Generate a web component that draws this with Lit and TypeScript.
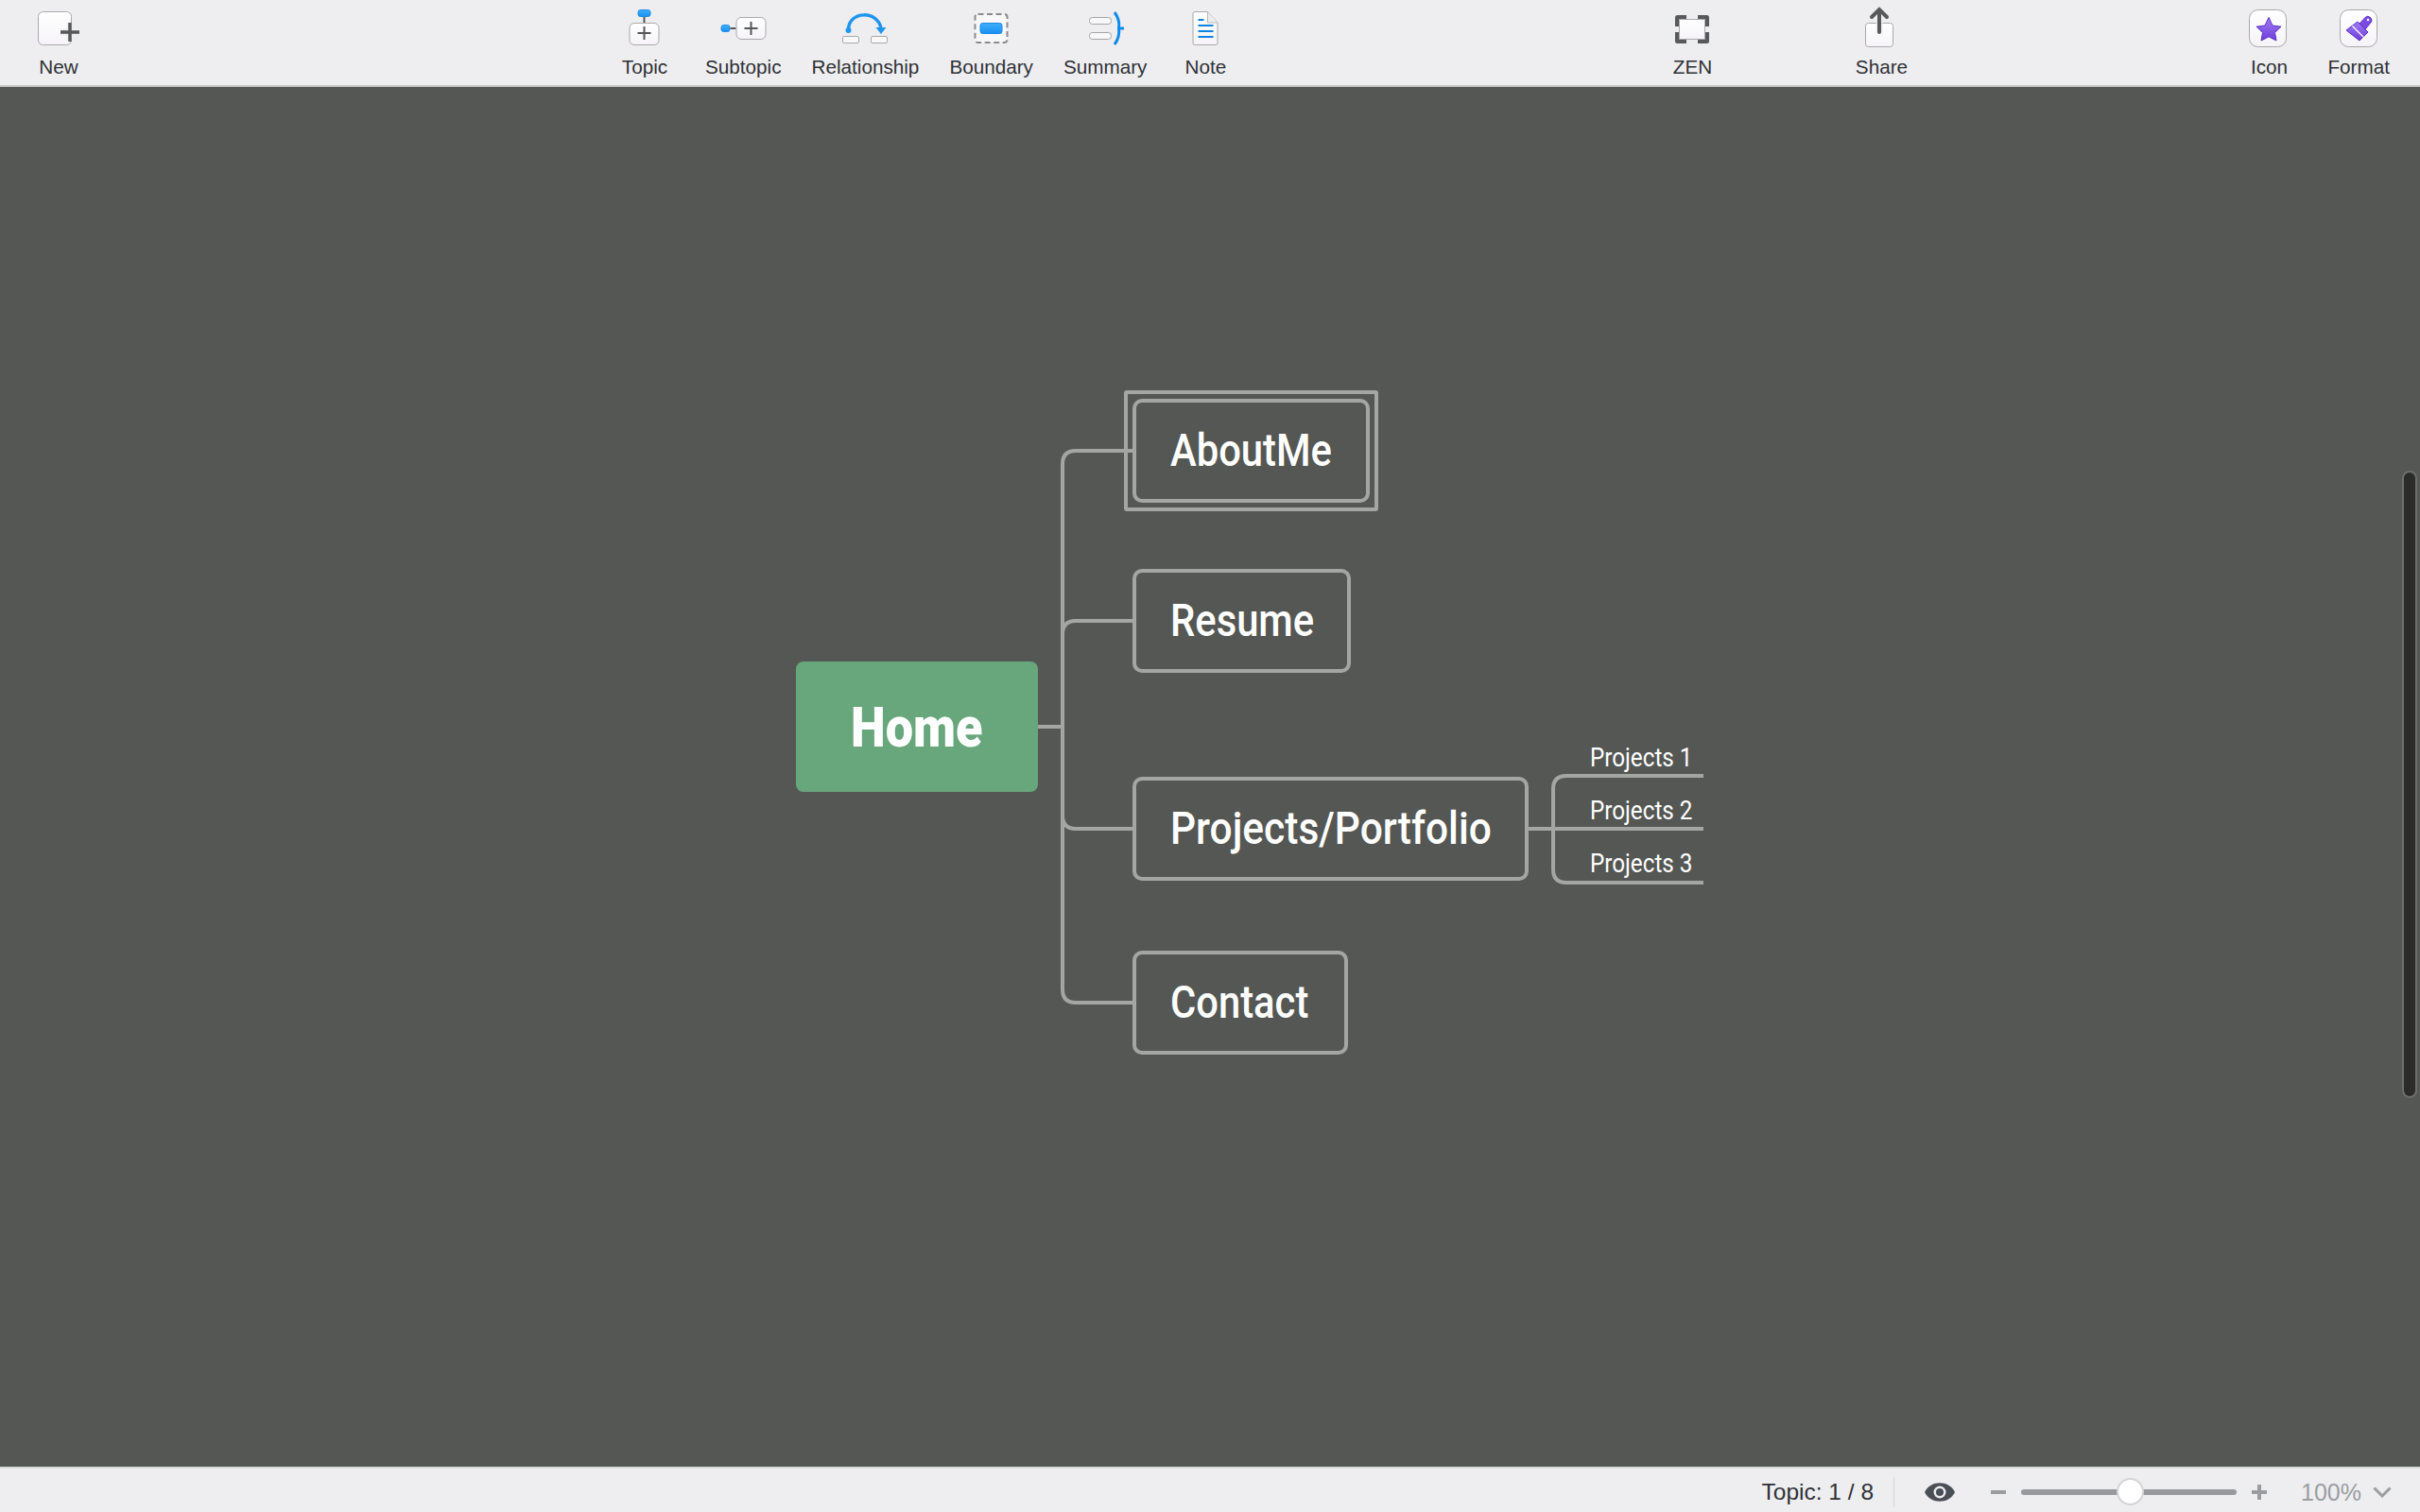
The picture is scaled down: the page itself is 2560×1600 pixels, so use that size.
import { LitElement, css, html, svg } from 'lit';
import { customElement } from 'lit/decorators.js';

const CANVAS_TOP = 92;

// page coordinates, the map is a free canvas
const topics = [
  { label: 'AboutMe', x: 1198, y: 422, w: 251, h: 110, cls: '' },
  { label: 'Resume', x: 1198, y: 602, w: 231, h: 110, cls: '' },
  { label: 'Projects/Portfolio', x: 1198, y: 822, w: 419, h: 110, cls: 'wide' },
  { label: 'Contact', x: 1198, y: 1006, w: 228, h: 110, cls: '' },
];

const subtopics = [
  { label: 'Projects 1', x: 1682, y: 785 },
  { label: 'Projects 2', x: 1682, y: 841 },
  { label: 'Projects 3', x: 1682, y: 897 },
];

const plus = (cx: number, cy: number, r: number, w = 2) => svg`
  <path d="M${cx - r} ${cy}H${cx + r}M${cx} ${cy - r}V${cy + r}" stroke="#555759" stroke-width=${w} fill="none" />
`;

const card = (x: number, y: number, w: number, h: number, r = 5) => svg`
  <rect x=${x + 0.5} y=${y + 0.5} width=${w - 1} height=${h - 1} rx=${r} fill="url(#card)" stroke="#a9a9ab" />
`;

const blue = (x: number, y: number, w: number, h: number) => svg`
  <rect x=${x + 0.5} y=${y + 0.5} width=${w - 1} height=${h - 1} rx="2.5" fill="url(#blue)" stroke="#1a8be6" />
`;

const icons: Record<string, unknown> = {
  New: svg`
    ${card(40, 12, 36, 36)}
    <path d="M64 34H84M74 24V44" stroke="#eeeef0" stroke-width="7" fill="none" />
    ${plus(74, 34, 10, 3.5)}
  `,
  Topic: svg`
    <path d="M682 18V24" stroke="#555759" stroke-width="2" />
    ${blue(675, 10, 14, 8)}
    ${card(666, 24, 32, 24)}
    ${plus(682, 35, 7)}
  `,
  Subtopic: svg`
    <path d="M772 30H778" stroke="#555759" stroke-width="2" />
    ${blue(762, 26, 10, 8)}
    ${card(778, 18, 32, 24)}
    ${plus(794, 30, 7)}
  `,
  Relationship: svg`
    <rect x="892.5" y="38.5" width="17" height="7" rx="1.5" fill="#f8f8fa" stroke="#a9a9ab" />
    <rect x="922.5" y="38.5" width="17" height="7" rx="1.5" fill="#f8f8fa" stroke="#a9a9ab" />
    <path d="M898.5 31C899 11 930 11 933 30" stroke="#1e96ee" stroke-width="3.5" fill="none" />
    <circle cx="898.5" cy="32" r="3" fill="#1e96ee" />
    <path d="M927.5 29H938.5L933 36Z" fill="#1e96ee" />
  `,
  Boundary: svg`
    <rect x="1031" y="15" width="34" height="30" rx="3" fill="#f8f7fa" stroke="#8b8b8d" stroke-width="2" stroke-dasharray="6 3.5" />
    <rect x="1036.5" y="24.5" width="23" height="11" rx="2.5" fill="url(#blue)" stroke="#1a8be6" />
  `,
  Summary: svg`
    <rect x="1152.5" y="18.5" width="23" height="7" rx="3" fill="#f8f8fa" stroke="#a3a3a5" />
    <rect x="1152.5" y="34.5" width="23" height="7" rx="3" fill="#f8f8fa" stroke="#a3a3a5" />
    <path d="M1179 13Q1185 21 1183.5 30Q1185 39 1179 47M1183.5 30H1189" stroke="#0f8bea" stroke-width="3" fill="none" />
  `,
  Note: svg`
    <path d="M1264.5 12.5H1278L1288.5 24V45.5Q1288.5 47.5 1286.5 47.5H1264.5Q1262.5 47.5 1262.5 45.5V14.5Q1262.5 12.5 1264.5 12.5Z" fill="url(#card)" stroke="#a9a9ab" />
    <path d="M1278 12.5V24H1288.5" fill="#ececee" stroke="#b8b8ba" />
    <path d="M1268 21H1274M1268 27H1284M1268 33H1284M1268 39H1284" stroke="#0f84e0" stroke-width="2" fill="none" />
  `,
  ZEN: svg`
    <path d="M1774.5 28V18.5H1784M1796 18.5H1805.5V28M1805.5 34V43.5H1796M1784 43.5H1774.5V34" stroke="#58595b" stroke-width="5" fill="none" stroke-linejoin="round" />
    <rect x="1776.5" y="20.5" width="27" height="21" fill="url(#card)" stroke="#a9a9ab" />
  `,
  Share: svg`
    ${card(1973, 24, 30, 26, 3)}
    <path d="M1988 35V10M1980 18L1988 10L1996 18" stroke="#eeeef0" stroke-width="7" fill="none" opacity="0.8" />
    <path d="M1988 34V10M1980 18L1988 10L1996 18" stroke="#58595b" stroke-width="4" fill="none" stroke-linecap="round" />
  `,
  Icon: svg`
    ${card(2380, 10, 40, 40, 9)}
    <path d="M2401 18.5L2405 27L2414 28.2L2407.5 34.5L2409 43L2401 38.8L2393 43L2394.5 34.5L2388 28.2L2397 27Z" fill="url(#purple)" stroke="#5b30c4" />
  `,
  Format: svg`
    ${card(2476, 10, 40, 40, 9)}
    <path d="M2483 32L2495 23L2506 34L2497 43Z" fill="url(#purple)" stroke="#5b30c4" />
    <path d="M2489.5 27.5L2501 39" stroke="#f4f1fb" stroke-width="1.5" />
    <path d="M2497 25L2503 18.5A3.5 3.5 0 1 1 2508.5 24.5L2503 31Z" fill="#7a4be0" stroke="#5b30c4" />
    <circle cx="2506" cy="21" r="1.3" fill="#f4f1fb" />
  `,
};

// viewBox left edge of each 60px icon, so the drawings can keep page coordinates
const tool = (label: string, cx: number) => html`
  <div class="tool">
    <svg class="tool-icon" viewBox="${cx - 30} 0 60 59" width="60" height="59">${icons[label]}</svg>
    <span class="tool-label">${label}</span>
  </div>
`;

@customElement('app-root')
export class AppRoot extends LitElement {
  static styles = css`
    :host {
      display: flex;
      flex-direction: column;
      height: 100vh;
      overflow: hidden;
      font-family: "Liberation Sans", Arial, sans-serif;
      background: #555754;
    }

    .defs {
      position: absolute;
      width: 0;
      height: 0;
    }

    .toolbar {
      display: flex;
      flex: none;
      height: 90px;
      padding: 0 32px;
      background: #eeeef0;
      border-bottom: 2px solid #cbcbc9;
    }

    .group {
      display: flex;
      gap: 32px;
    }

    .group-insert {
      margin-left: 560px;
    }

    .group-insert .tool:first-child {
      margin-right: 2px;
    }

    .group-view {
      gap: 140px;
      margin-left: 455px;
    }

    .group-side {
      margin-left: auto;
    }

    .tool {
      display: flex;
      flex-direction: column;
      align-items: center;
      min-width: 60px;
    }

    .tool-icon {
      display: block;
      flex: none;
    }

    .tool-label {
      font-size: 20.7px;
      line-height: 24px;
      color: #2f3136;
      white-space: nowrap;
    }

    .canvas {
      position: relative;
      flex: 1;
      background: #555754;
    }

    .links {
      position: absolute;
      inset: 0;
      width: 100%;
      height: 100%;
    }

    .links path {
      fill: none;
      stroke: #a3a6a2;
      stroke-width: 4;
    }

    .node {
      position: absolute;
      display: flex;
      align-items: center;
      box-sizing: border-box;
      color: #fff;
      font-family: Roboto, sans-serif;
      white-space: nowrap;
    }

    .node span {
      display: inline-block;
      transform-origin: left center;
    }

    .root {
      padding-left: 58px;
      background: #68a67c;
      border-radius: 8px;
      font-size: 60px;
      font-weight: 900;
    }

    .root span {
      transform: scaleX(0.87);
    }

    .topic {
      padding-left: 36px;
      padding-bottom: 1px;
      background: #555754;
      border: 4px solid #a3a6a2;
      border-radius: 10px;
      font-size: 48px;
      font-weight: 500;
    }

    .topic span {
      transform: scaleX(0.87);
    }

    .topic.wide span {
      transform: scaleX(0.885);
    }

    .sub {
      font-size: 28px;
      line-height: 34px;
    }

    .sub span {
      transform: scaleX(0.865);
    }

    .callout {
      position: absolute;
      box-sizing: border-box;
      left: 1189px;
      top: 321px;
      width: 269px;
      height: 128px;
      border: 4px solid #a3a6a2;
      border-radius: 3px;
    }

    .scrollbar {
      position: absolute;
      top: 406px;
      left: 2541px;
      box-sizing: border-box;
      width: 16px;
      height: 664px;
      background: #2b2c2a;
      border: 2px solid #6d6f6b;
      border-radius: 8px;
    }

    .status {
      display: flex;
      flex: none;
      align-items: center;
      justify-content: flex-end;
      box-sizing: border-box;
      height: 48px;
      padding-top: 4px;
      padding-right: 30px;
      background: #eeeef0;
      border-top: 2px solid #d9d9d9;
    }

    .count {
      font-size: 24.5px;
      color: #2f3136;
      margin-right: 21px;
    }

    .divider {
      width: 1px;
      height: 32px;
      background: #d6d6d9;
      margin-right: 32px;
    }

    .eye {
      display: block;
      margin-right: 38px;
    }

    .step {
      display: block;
    }

    .slider {
      position: relative;
      width: 228px;
      height: 6px;
      margin: 0 16px;
      background: #98999d;
      border-radius: 3px;
    }

    .knob {
      position: absolute;
      top: -12px;
      left: 101px;
      box-sizing: border-box;
      width: 29px;
      height: 29px;
      background: #fff;
      border: 2px solid #d4d4d4;
      border-radius: 50%;
    }

    .zoom {
      margin-left: 36px;
      font-size: 25px;
      color: #9b9da1;
    }

    .chevron {
      display: block;
      margin-left: 12px;
    }
  `;

  render() {
    return html`
      <svg class="defs">
        <defs>
          <linearGradient id="card" x1="0" y1="0" x2="0" y2="1">
            <stop offset="0" stop-color="#ffffff" />
            <stop offset="1" stop-color="#f5f3f8" />
          </linearGradient>
          <linearGradient id="blue" x1="0" y1="0" x2="0" y2="1">
            <stop offset="0" stop-color="#3fb0fb" />
            <stop offset="1" stop-color="#1a90f0" />
          </linearGradient>
          <linearGradient id="purple" x1="0" y1="0" x2="0" y2="1">
            <stop offset="0" stop-color="#a27cf4" />
            <stop offset="1" stop-color="#6c3ddb" />
          </linearGradient>
        </defs>
      </svg>

      <header class="toolbar">
        <div class="group">${tool('New', 62)}</div>
        <div class="group group-insert">
          ${tool('Topic', 682.5)}
          ${tool('Subtopic', 785.5)}
          ${tool('Relationship', 916)}
          ${tool('Boundary', 1048.5)}
          ${tool('Summary', 1169)}
          ${tool('Note', 1275.5)}
        </div>
        <div class="group group-view">
          ${tool('ZEN', 1790)}
          ${tool('Share', 1990)}
        </div>
        <div class="group group-side">
          ${tool('Icon', 2401)}
          ${tool('Format', 2496)}
        </div>
      </header>

      <main class="canvas">
        <svg class="links" viewBox="0 ${CANVAS_TOP} 2560 1460">
          <path d="M1098 769H1124" />
          <path d="M1198 477H1138Q1124 477 1124 491V1047Q1124 1061 1138 1061H1198" />
          <path d="M1198 657H1138Q1124 657 1124 671" />
          <path d="M1198 877H1138Q1124 877 1124 863" />
          <path d="M1617 877H1802" />
          <path d="M1802 821H1657Q1643 821 1643 835V920Q1643 934 1657 934H1802" />
        </svg>
        <div class="callout"></div>
        <div class="node root" style="left:842px;top:${700 - CANVAS_TOP}px;width:256px;height:138px">
          <span>Home</span>
        </div>
        ${topics.map(
          (t) => html`
            <div class="node topic ${t.cls}" style="left:${t.x}px;top:${t.y - CANVAS_TOP}px;width:${t.w}px;height:${t.h}px">
              <span>${t.label}</span>
            </div>
          `,
        )}
        ${subtopics.map(
          (s) => html`
            <div class="node sub" style="left:${s.x}px;top:${s.y - CANVAS_TOP}px"><span>${s.label}</span></div>
          `,
        )}
        <div class="scrollbar"></div>
      </main>

      <footer class="status">
        <span class="count">Topic: 1 / 8</span>
        <div class="divider"></div>
        <svg class="eye" width="32" height="20" viewBox="0 0 32 20">
          <path d="M0 10C6 -3 26 -3 32 10C26 23 6 23 0 10Z" fill="#4a4f57" />
          <circle cx="16" cy="10" r="6.5" fill="#eeeef0" />
          <circle cx="16" cy="10" r="4" fill="#4a4f57" />
        </svg>
        <svg class="step" width="16" height="4" viewBox="0 0 16 4">
          <path d="M0 2H16" stroke="#9a9ca0" stroke-width="4" />
        </svg>
        <div class="slider"><div class="knob"></div></div>
        <svg class="step" width="16" height="16" viewBox="0 0 16 16">
          <path d="M0 8H16M8 0V16" stroke="#9a9ca0" stroke-width="4" />
        </svg>
        <span class="zoom">100%</span>
        <svg class="chevron" width="20" height="12" viewBox="0 0 20 12">
          <path d="M1.5 1.5L10 10L18.5 1.5" stroke="#9b9da1" stroke-width="3" fill="none" />
        </svg>
      </footer>
    `;
  }
}
